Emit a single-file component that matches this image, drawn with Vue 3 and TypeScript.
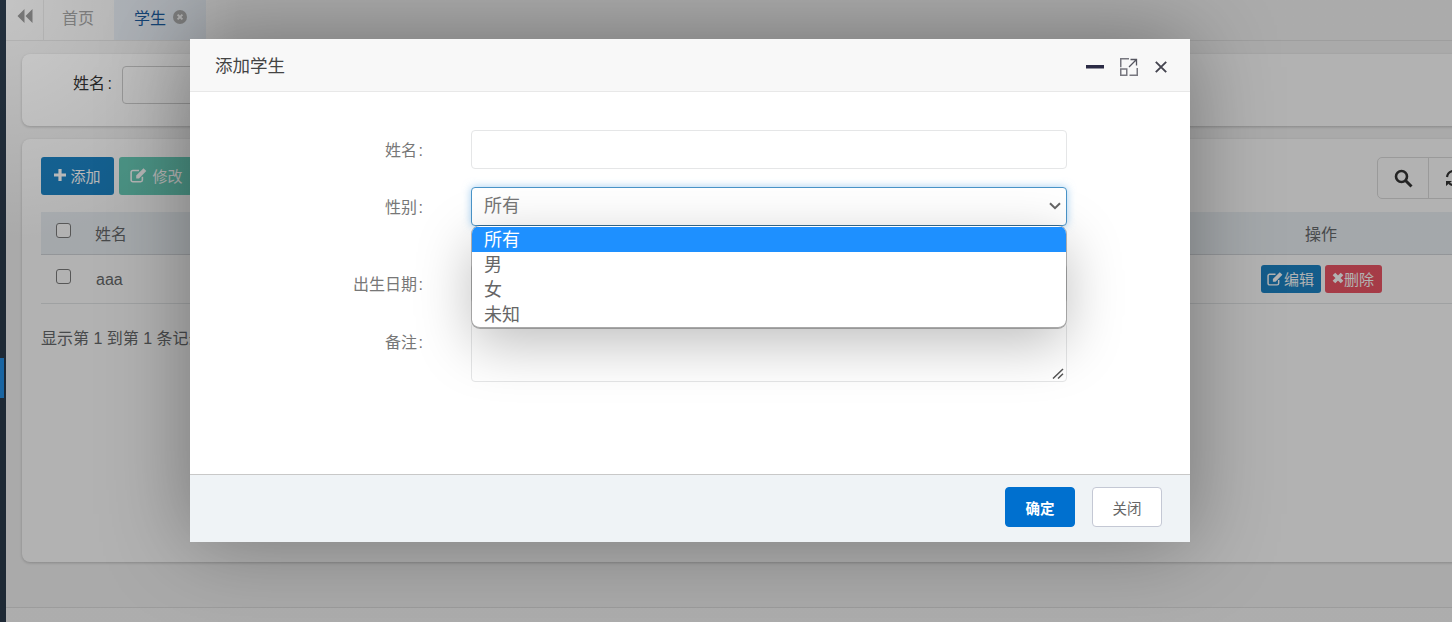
<template>
  <div class="page">
    <aside class="sidebar"><span class="side-active"></span></aside>

    <main class="main">
      <nav class="tabs">
        <button type="button" class="tab-back">
          <svg width="16" height="14" viewBox="0 0 16 14"><path d="M7.500 0v14L0.500 7zM15.500 0v14L8.500 7z" fill="currentColor" /></svg>
        </button>
        <a class="tab">首页</a>
        <a class="tab tab-active">
          学生
          <svg class="tab-close" width="14" height="14" viewBox="0 0 14 14">
            <circle cx="7" cy="7" r="7" fill="#a9a9a9" />
            <path d="M4.600 4.600l4.800 4.800M9.400 4.600l-4.800 4.800" stroke="#eee" stroke-width="2" />
          </svg>
        </a>
      </nav>

      <div class="content">
        <section class="card search-card">
          <label class="search-label">姓名 :</label>
          <input class="search-input" type="text" />
        </section>

        <section class="card table-card">
          <div class="toolbar">
            <div class="toolbar-left">
              <button type="button" class="btn btn-add">
                <svg width="12" height="12" viewBox="0 0 12 12"><path d="M4.400 0h3.200v4.400H12v3.200H7.600V12H4.400V7.600H0V4.400h4.400z" fill="currentColor" /></svg>
                添加
              </button>
              <button type="button" class="btn btn-edit">
                <svg width="18" height="16" viewBox="0 0 16 14"><path d="M11 8.500V11.500a1.500 1.500 0 0 1-1.500 1.500h-7A1.500 1.500 0 0 1 1 11.500v-7A1.500 1.500 0 0 1 2.500 3H8" fill="none" stroke="currentColor" stroke-width="1.400" /><path d="M5.500 7.500L12 1l2.500 2.500L8 10H5.500z" fill="currentColor" /></svg>
                修改
              </button>
            </div>
            <div class="toolbar-right">
              <button type="button" class="tool-btn">
                <svg width="19" height="19" viewBox="0 0 19 19"><circle cx="7.500" cy="7.500" r="5.500" fill="none" stroke="currentColor" stroke-width="2.600" /><path d="M11.500 11.500l6 6" stroke="currentColor" stroke-width="3" /></svg>
              </button>
              <button type="button" class="tool-btn">
                <svg width="18" height="18" viewBox="0 0 18 18"><path d="M2 8a7 7 0 0 1 12-4M16 10a7 7 0 0 1-12 4" fill="none" stroke="currentColor" stroke-width="2.200" /><path d="M1 12h6l-6 5zM17 6h-6l6-5z" fill="currentColor" /></svg>
              </button>
            </div>
          </div>

          <div class="grid-row grid-head">
            <input class="check" type="checkbox" />
            <span>姓名</span>
            <span class="col-op">操作</span>
          </div>
          <div v-for="s in students" :key="s.name" class="grid-row grid-body">
            <input class="check" type="checkbox" />
            <span class="cell-name">{{ s.name }}</span>
            <span class="col-op row-actions">
              <button type="button" class="mini mini-edit">
                <svg width="17" height="15" viewBox="0 0 16 14"><path d="M11 8.500V11.500a1.500 1.500 0 0 1-1.500 1.500h-7A1.500 1.500 0 0 1 1 11.500v-7A1.500 1.500 0 0 1 2.500 3H8" fill="none" stroke="currentColor" stroke-width="1.400" /><path d="M5.500 7.500L12 1l2.500 2.500L8 10H5.500z" fill="currentColor" /></svg>编辑
              </button>
              <button type="button" class="mini mini-del">
                <svg width="12" height="12" viewBox="0 0 11 11"><path d="M1.800 1.800l7.400 7.400M9.200 1.800L1.800 9.200" stroke="currentColor" stroke-width="3.400" /></svg>删除
              </button>
            </span>
          </div>
          <p class="pager">显示第 1 到第 1 条记录,总共 1 条记录</p>
        </section>
      </div>

      <footer class="page-foot"></footer>
    </main>

    <div class="overlay">
      <section class="modal">
        <header class="modal-head">
          <h3 class="modal-title">添加学生</h3>
          <div class="modal-icons">
            <svg width="18" height="4" viewBox="0 0 18 4"><rect width="18" height="3.500" fill="#2b2b45" /></svg>
            <svg width="18" height="18" viewBox="0 0 18 18">
              <path d="M9 .75H.75v8.500M17.250 10v7.250H9.500" fill="none" stroke="#77777f" stroke-width="1.500" />
              <rect x=".75" y="11" width="6" height="6.250" fill="none" stroke="#77777f" stroke-width="1.500" />
              <path d="M9 9L16 2M10.500 1.500h6v6" fill="none" stroke="#55555f" stroke-width="1.300" />
            </svg>
            <svg class="icon-x" width="12" height="12" viewBox="0 0 12 12"><path d="M.8 .8l10.400 10.400M11.200 .8L.8 11.200" stroke="#44444f" stroke-width="1.900" /></svg>
          </div>
        </header>

        <form class="modal-body" @submit.prevent>
          <div class="field">
            <label class="field-label">姓名 :</label>
            <input class="control" type="text" />
          </div>
          <div class="field field-gender">
            <label class="field-label">性别 :</label>
            <div class="select-wrap">
              <select class="control select">
                <option v-for="o in genders" :key="o">{{ o }}</option>
              </select>
              <svg class="chevron" width="12" height="8" viewBox="0 0 12 8"><path d="M1 1.200l5 5 5-5" fill="none" stroke="#666" stroke-width="2" /></svg>
              <ul class="options">
                <li v-for="(o, i) in genders" :key="o" class="option" :class="{ selected: i === 0 }">{{ o }}</li>
              </ul>
            </div>
          </div>
          <div class="field">
            <label class="field-label">出生日期 :</label>
            <input class="control" type="text" />
          </div>
          <div class="field">
            <label class="field-label">备注 :</label>
            <div class="area-wrap">
              <textarea class="control area"></textarea>
              <svg class="resizer" width="12" height="11" viewBox="0 0 12 11"><path d="M1 10.500L11 1M6 10.500L11 5.800" stroke="#555" stroke-width="1.500" fill="none" /></svg>
            </div>
          </div>
        </form>

        <footer class="modal-foot">
          <button type="button" class="foot-btn foot-ok">确定</button>
          <button type="button" class="foot-btn">关闭</button>
        </footer>
      </section>
    </div>
  </div>
</template>

<script setup lang="ts">
const genders: string[] = ['所有', '男', '女', '未知']
const students: { name: string }[] = [{ name: 'aaa' }]
</script>

<style>
html,
body {
  margin: 0;
  height: 100%;
  overflow: hidden;
}
</style>

<style scoped>
.page {
  position: relative;
  display: flex;
  width: 1452px;
  height: 622px;
  overflow: hidden;
  font-family: "Liberation Sans", "Noto Sans CJK SC", sans-serif;
  font-size: 16px;
  color: #676a6c;
  background: #f3f3f3;
}

button {
  font-family: inherit;
}

.sidebar {
  flex: 0 0 6px;
  background: #2b3b4c;
  padding-top: 358px;
  box-sizing: border-box;
}

.side-active {
  display: block;
  width: 4px;
  height: 40px;
  background: #2491e8;
}

.main {
  flex: 1;
  min-width: 0;
  display: flex;
  flex-direction: column;
}

.tabs {
  display: flex;
  height: 41px;
  box-sizing: border-box;
  border-bottom: 1px solid #e2e2e2;
  background: #f5f5f5;
}

.tab-back {
  width: 38px;
  border: 0;
  border-right: 1px solid #e4e4e4;
  background: transparent;
  color: #959595;
  padding: 0 0 6px;
}

.tab {
  display: flex;
  align-items: center;
  width: 70px;
  box-sizing: border-box;
  padding: 0 0 7px 18px;
  color: #a0a0a0;
}

.tab-active {
  width: 92px;
  padding-left: 20px;
  background: #e5ebf2;
  color: #1c5a9c;
}

.tab-close {
  margin-left: 7px;
}

.content {
  flex: 1;
  display: flex;
  flex-direction: column;
  gap: 13px;
  padding: 13px 0 0 16px;
  margin-right: -44px;
}

.card {
  background: #fff;
  border-radius: 8px;
  box-shadow: 0 1px 3px rgba(0, 0, 0, 0.2);
}

.search-card {
  height: 72px;
  display: flex;
  align-items: flex-start;
  padding: 12px 0 0 51px;
  box-sizing: border-box;
  color: #333;
}

.search-label {
  width: 49px;
  line-height: 36px;
  word-spacing: -2px;
  white-space: nowrap;
}

.search-input {
  width: 220px;
  height: 38px;
  box-sizing: border-box;
  border: 1px solid #ccc;
  border-radius: 4px;
  background: #fff;
}

.table-card {
  height: 423px;
  padding: 18px 19px 0;
  box-sizing: border-box;
}

.toolbar {
  display: flex;
  justify-content: space-between;
  height: 55px;
}

.toolbar-left {
  display: flex;
  gap: 5px;
}

.btn {
  display: flex;
  align-items: center;
  justify-content: center;
  gap: 4px;
  height: 38px;
  border: 0;
  border-radius: 3px;
  color: #fff;
  font-size: 15px;
  padding: 0 0 2px;
}

.btn-add {
  width: 73px;
  background: #1c84c6;
}

.btn-edit {
  width: 75px;
  background: #1ab394;
  opacity: 0.65;
}

.toolbar-right {
  display: flex;
  height: 42px;
  box-sizing: border-box;
  border: 1px solid #dcdcdc;
  border-radius: 5px;
  margin-right: -2px;
}

.tool-btn {
  width: 50px;
  border: 0;
  background: transparent;
  color: #333;
  padding: 0;
  display: flex;
  align-items: center;
  justify-content: center;
}

.tool-btn + .tool-btn {
  border-left: 1px solid #dcdcdc;
}

.grid-row {
  display: grid;
  grid-template-columns: 54px 1fr 312px;
  align-items: center;
  box-sizing: border-box;
}

.grid-head {
  height: 43px;
  background: #ebf0f5;
  border-bottom: 1px solid #d2d6da;
}

.grid-body {
  height: 49px;
  border-bottom: 1px solid #e4e6e8;
}

.cell-name {
  padding: 1px 0 0 1px;
}

.check {
  appearance: none;
  width: 15px;
  height: 15px;
  margin: 0 0 5px 15px;
  box-sizing: border-box;
  border: 1.5px solid #7d7d7d;
  border-radius: 3px;
  background: #fff;
}

.col-op {
  text-align: center;
}

.row-actions {
  display: flex;
  justify-content: center;
  gap: 4px;
}

.mini {
  display: flex;
  align-items: center;
  justify-content: center;
  height: 28px;
  border: 0;
  border-radius: 3px;
  padding: 0 0 2px;
  color: #fff;
  font-size: 15px;
}

.mini-edit {
  width: 60px;
  background: #1c84c6;
}

.mini-del {
  width: 57px;
  background: #ed5565;
}

.pager {
  margin: 24px 0 0;
  line-height: 22px;
}

.page-foot {
  margin-top: auto;
  height: 14px;
  border-top: 1px solid #e0e0e0;
  background: #f8f8f8;
}

.overlay {
  position: absolute;
  inset: 0;
  padding: 39px 0 0 190px;
  background: radial-gradient(circle at 0 0, rgba(0, 0, 0, 0.2), rgba(0, 0, 0, 0.3) 240px);
}

.modal {
  width: 1000px;
  height: 503px;
  display: flex;
  flex-direction: column;
  background: #fff;
  box-shadow: 0 0 80px rgba(0, 0, 0, 0.35);
  color: #666;
}

.modal-head {
  height: 53px;
  box-sizing: border-box;
  display: flex;
  align-items: center;
  justify-content: space-between;
  padding: 0 23px 0 25px;
  background: #f8f8f8;
  border-bottom: 1px solid #e8e8e8;
}

.modal-title {
  margin: 0 0 2px;
  font-size: 17.5px;
  font-weight: 400;
  color: #444;
}

.modal-icons {
  display: flex;
  align-items: center;
  gap: 16px;
  margin-top: 4px;
}

.icon-x {
  margin-left: 1px;
}

.modal-body {
  flex: 1;
  padding-top: 38px;
  box-sizing: border-box;
}

.field {
  display: flex;
  align-items: flex-start;
  gap: 46px;
  margin-bottom: 19px;
}

.field-gender {
  margin-bottom: 38px;
}

.field:first-child {
  margin-bottom: 18px;
}

.field-label {
  width: 235px;
  height: 39px;
  box-sizing: border-box;
  padding-right: 2px;
  text-align: right;
  font-size: 16px;
  line-height: 41px;
  word-spacing: -3px;
  color: #777;
}

.control {
  display: block;
  width: 596px;
  height: 39px;
  box-sizing: border-box;
  border: 1px solid #e5e6e7;
  border-radius: 4px;
  background: #fff;
  font-family: inherit;
  outline: none;
}

.select-wrap,
.area-wrap {
  position: relative;
}

.select {
  appearance: none;
  padding: 0 0 2px 12px;
  font-size: 18px;
  color: #777;
  border-color: #4a94c8;
  box-shadow: 0 0 8px rgba(102, 175, 233, 0.6);
}

.chevron {
  position: absolute;
  top: 15px;
  right: 6px;
}

.options {
  position: absolute;
  z-index: 2;
  top: 39px;
  left: 1px;
  width: 594px;
  height: 102px;
  box-sizing: border-box;
  margin: 0;
  padding: 1px 0 0;
  list-style: none;
  overflow: hidden;
  background: #fff;
  border-radius: 8px;
  border-bottom: 1px solid #a8a8a8;
  box-shadow: 0 0 0 1px rgba(0, 0, 0, 0.28), 0 16px 56px rgba(0, 0, 0, 0.26);
}

.option {
  height: 25px;
  padding-left: 12px;
  font-size: 18px;
  line-height: 26px;
  color: #666;
}

.option.selected {
  background: #1e90ff;
  color: #fff;
}

.area {
  height: 60px;
  resize: none;
}

.resizer {
  position: absolute;
  right: 3px;
  bottom: 3px;
}

.modal-foot {
  height: 68px;
  box-sizing: border-box;
  display: flex;
  justify-content: flex-end;
  gap: 17px;
  padding: 12px 28px 0 0;
  background: #eff3f6;
  border-top: 1px solid #c8c8c8;
}

.foot-btn {
  width: 70px;
  height: 40px;
  box-sizing: border-box;
  border: 1px solid #c4c8d4;
  border-radius: 4px;
  background: #fff;
  color: #666;
  font-size: 14.5px;
  padding: 0;
}

.foot-ok {
  border-color: #0070cf;
  background: #0070cf;
  color: #fff;
  font-weight: 700;
}
</style>
